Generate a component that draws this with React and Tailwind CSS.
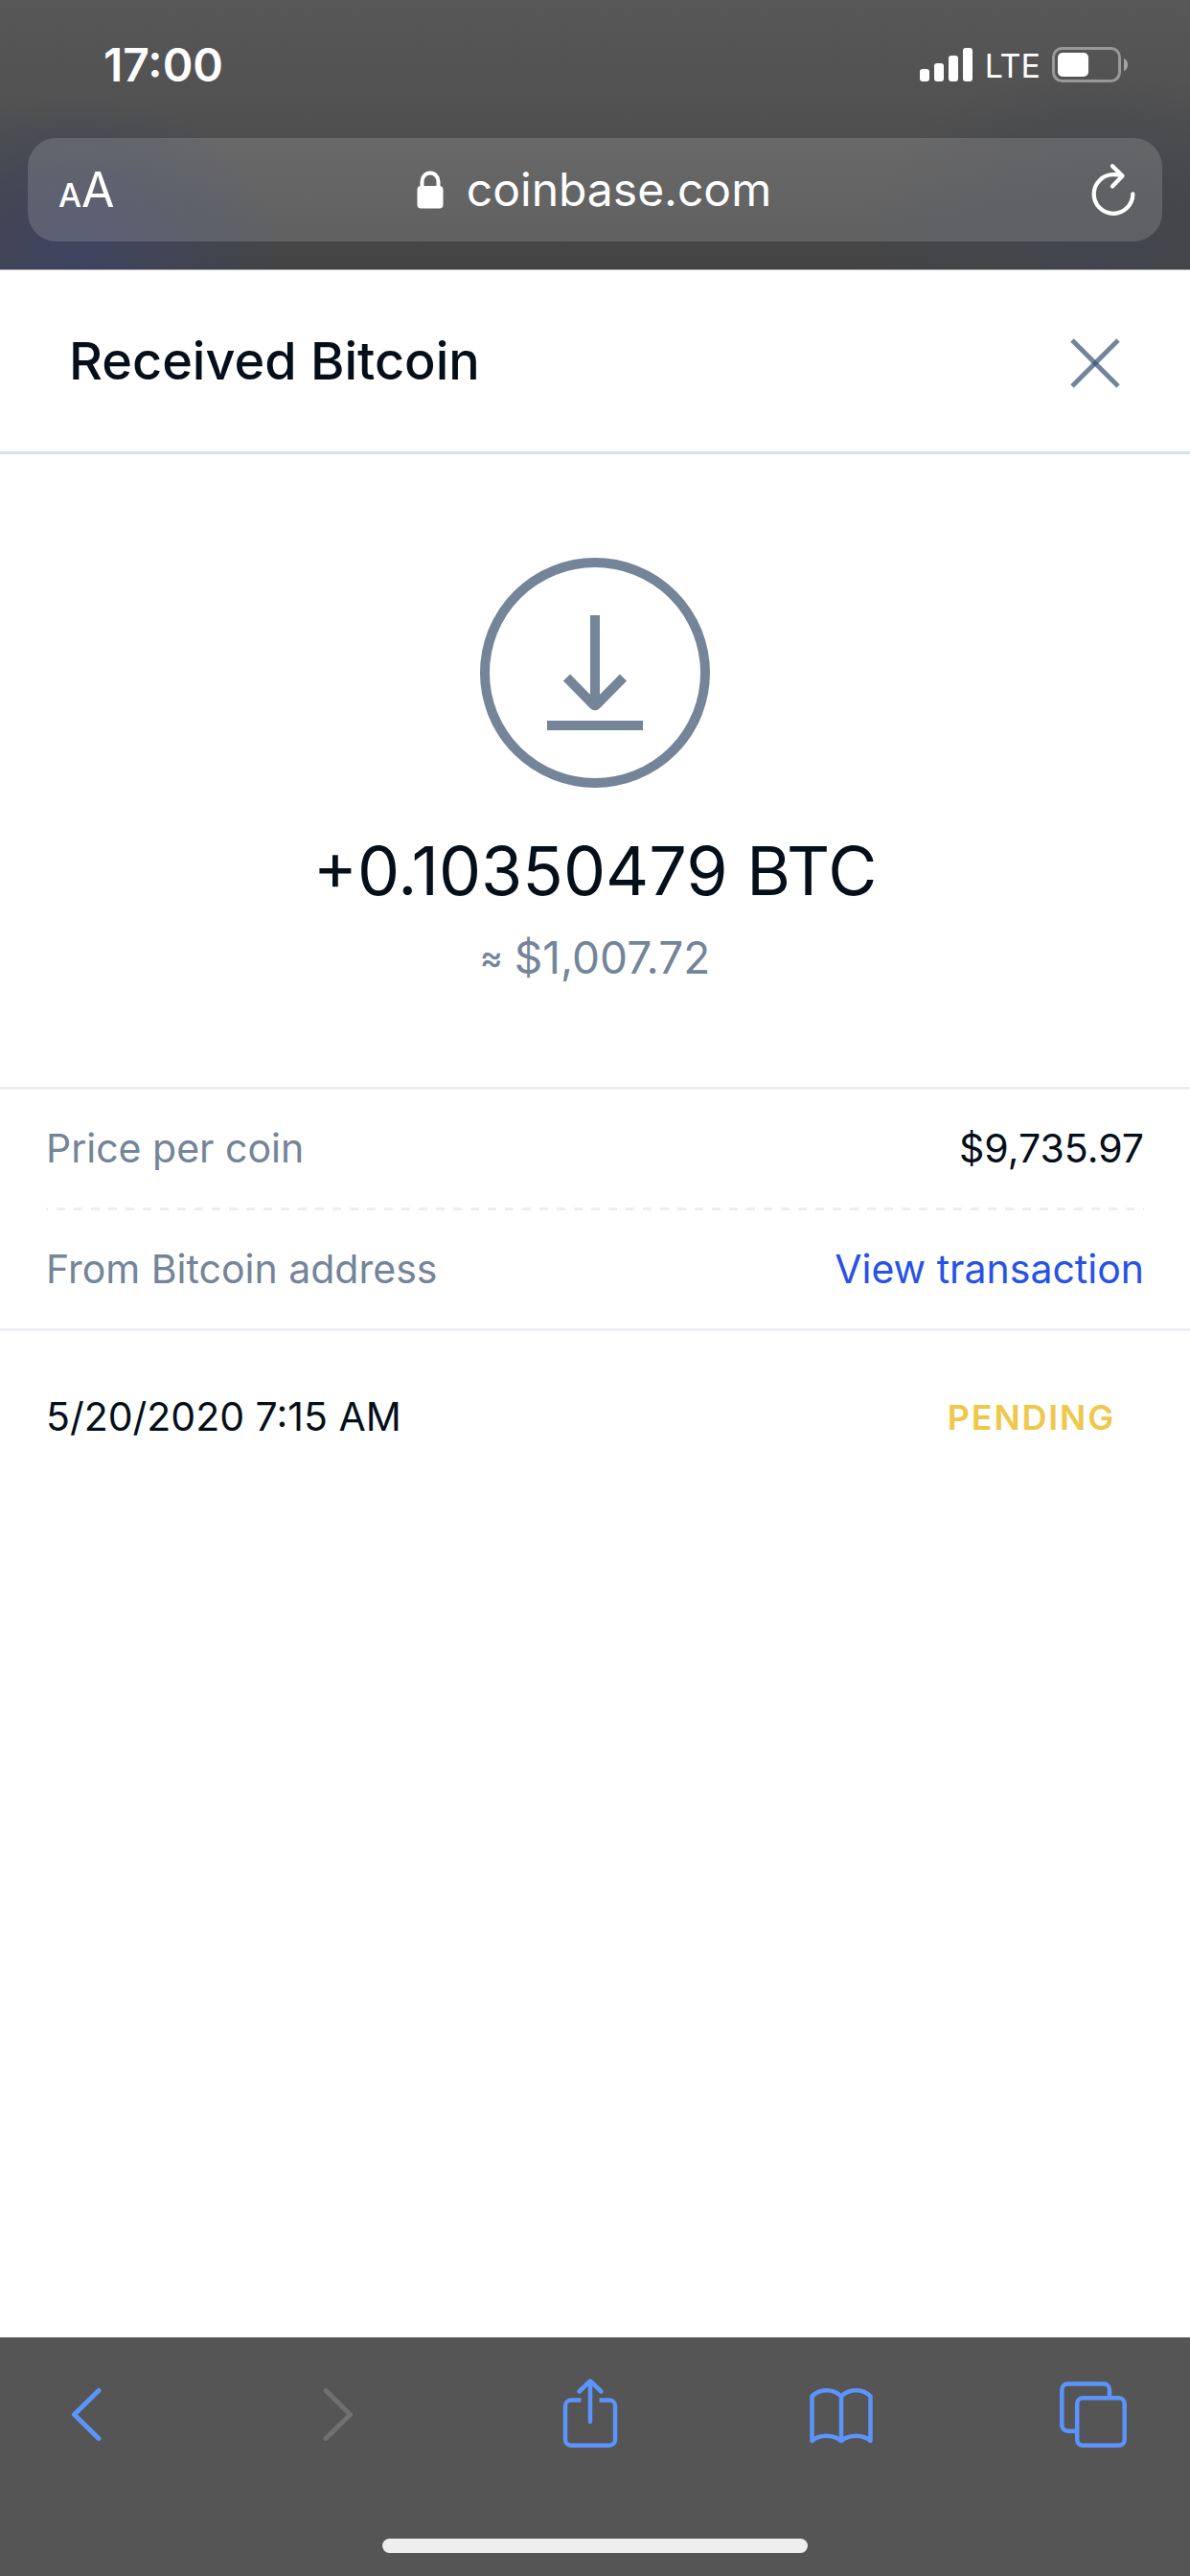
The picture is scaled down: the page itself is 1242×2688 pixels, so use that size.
import { useState } from "react";

const details = [
  { label: "Price per coin", value: "$9,735.97" },
  { label: "From Bitcoin address", value: "View transaction", href: "#transaction" },
];

function StatusBar() {
  return (
    <div className="flex h-36 items-center justify-between pr-16 pb-2 pl-[108px] text-white">
      <span className="text-5xl font-semibold">17:00</span>
      <div className="flex items-center">
        <svg width="56" height="36" viewBox="0 0 56 36" fill="currentColor" aria-hidden="true">
          <rect x="0" y="22" width="10" height="13" rx="3" />
          <rect x="15" y="16" width="10" height="19" rx="3" />
          <rect x="30" y="8" width="10" height="27" rx="3" />
          <rect x="45" y="0" width="10" height="35" rx="3" />
        </svg>
        <span className="ml-3 text-[34px]">LTE</span>
        <svg className="ml-3" width="80" height="38" viewBox="0 0 80 38" aria-hidden="true">
          <rect x="1.5" y="1.5" width="69" height="34" rx="9" fill="none" stroke="#999" strokeWidth="3" />
          <rect x="6" y="6" width="32" height="25" rx="5" fill="#fff" />
          <path d="M75 12c3 1 4 4 4 6.500s-1 5.500-4 6.500z" fill="#a3a3a3" />
        </svg>
      </div>
    </div>
  );
}

function AddressBar() {
  return (
    <div className="mx-[29px] flex h-[108px] items-center justify-between rounded-[30px] bg-white/15 pr-6 pl-8 text-white">
      <button type="button" aria-label="Text size" className="flex w-[118px] items-baseline">
        <span className="text-[34px] leading-none font-medium">A</span>
        <span className="text-[50px]">A</span>
      </button>
      <div className="flex items-center gap-6">
        <svg width="28" height="40" viewBox="0 0 28 40" aria-hidden="true">
          <path d="M5.500 19V11.500a8.500 9 0 0 1 17 0V19" fill="none" stroke="#fff" strokeWidth="4" />
          <rect x="0.500" y="16" width="27" height="23.500" rx="4" fill="#fff" />
        </svg>
        <span className="text-5xl">coinbase.com</span>
      </div>
      <button type="button" aria-label="Reload" className="flex w-32 justify-end">
        <svg
          width="54"
          height="60"
          viewBox="0 0 54 60"
          fill="none"
          stroke="#fff"
          strokeWidth="4.300"
          strokeLinecap="round"
          strokeLinejoin="round"
        >
          <path d="M47.300 34.500A20.300 20.300 0 1 1 27 14.200c3.500 0 6.500.4 9 1.300" />
          <path d="M26 5.200 36.500 15.500 26 26.500" />
        </svg>
      </button>
    </div>
  );
}

function ReceiveIcon() {
  return (
    <svg width="240" height="240" viewBox="0 0 240 240" fill="none" stroke="#748499" strokeWidth="10" aria-hidden="true">
      <circle cx="120" cy="120" r="115" />
      <path d="M120 60V152" />
      <path d="M90.500 125 118.500 153.500Q120 155 121.500 153.500L149.500 125" />
      <path d="M70 175H170" />
    </svg>
  );
}

function ToolbarButton({ label, disabled, children }) {
  return (
    <button type="button" aria-label={label} disabled={disabled} className="text-[#5b94fb] disabled:text-[#707070]">
      <svg
        width="80"
        height="80"
        viewBox="0 0 80 80"
        fill="none"
        stroke="currentColor"
        strokeWidth="4.500"
        strokeLinecap="round"
        strokeLinejoin="round"
      >
        {children}
      </svg>
    </button>
  );
}

function Toolbar() {
  return (
    <footer className="bg-[#555] pt-[41px] pb-6">
      <nav className="flex justify-between pr-[61px] pl-[50px]">
        <ToolbarButton label="Back">
          <path strokeWidth="5" d="M53 14.500 27.500 39.500 53 64.500" />
        </ToolbarButton>
        <ToolbarButton label="Forward" disabled>
          <path strokeWidth="5" d="M27 14.500 52.500 39.500 27 64.500" />
        </ToolbarButton>
        <ToolbarButton label="Share">
          <path strokeLinecap="butt" d="M30.500 24.500H20a6 6 0 0 0-6 6V65.700a6 6 0 0 0 6 6H60a6 6 0 0 0 6-6V30.500a6 6 0 0 0-6-6H49.500" />
          <path d="M40 5V47M28.500 15.500 40 4.500 51.500 15.500" />
        </ToolbarButton>
        <ToolbarButton label="Bookmarks">
          <path d="M9.500 67V20.500C17 12 32 12 40 20.500 48 12 63 12 70.500 20.500V67C63 60 48 60 40 67 32 60 17 60 9.500 67ZM40 20.500V67" />
        </ToolbarButton>
        <ToolbarButton label="Tabs">
          <rect x="23.200" y="22.300" width="49.500" height="49.500" rx="6" />
          <path strokeLinecap="butt" d="M57 22V13.500a6 6 0 0 0-6-6H13.300a6 6 0 0 0-6 6V50.700a6 6 0 0 0 6 6H23" />
        </ToolbarButton>
      </nav>
      <div className="mx-auto mt-[89px] h-[15px] w-[444px] rounded-full bg-[#eee]" />
    </footer>
  );
}

export default function App() {
  const [open, setOpen] = useState(true);

  return (
    <div className="flex min-h-screen flex-col bg-white font-['Inter',sans-serif] text-[#050f19]">
      <header className="border-b border-[#aaa] bg-[radial-gradient(220px_170px_at_80px_270px,#3d4460,transparent),radial-gradient(260px_200px_at_92%_270px,#42454d,transparent),linear-gradient(#575757,#525252_100px,#434343)] pb-[29px]">
        <StatusBar />
        <AddressBar />
      </header>

      <main className="flex-1">
        {open && (
          <section aria-labelledby="dialog-title">
            <div className="flex h-48 items-center justify-between border-b-3 border-[#dae1e8] px-[72px]">
              <h1 id="dialog-title" className="text-[54px] font-medium">
                Received Bitcoin
              </h1>
              <button type="button" aria-label="Close" onClick={() => setOpen(false)} className="pt-1">
                <svg width="54" height="54" viewBox="0 0 54 54" stroke="#3f5573" strokeOpacity="0.720" strokeWidth="5">
                  <path d="M3 3 51 51" />
                  <path d="M51 3 3 51" />
                </svg>
              </button>
            </div>

            <div className="flex flex-col items-center border-b-3 border-[#ebeff2] pt-27 pb-[99px]">
              <ReceiveIcon />
              <p className="mt-[45px] text-[70px] leading-[84px]">+0.10350479 BTC</p>
              <p className="mt-3 flex items-center gap-3 text-[46px] leading-[72px] text-[#748499]">
                <span className="text-4xl font-medium">≈</span>
                <span>$1,007.72</span>
              </p>
            </div>

            <dl className="border-b-3 border-[#ebeff2] px-12 text-[41px]">
              {details.map((item, i) => (
                <div key={item.label}>
                  {i > 0 && (
                    <div className="h-[3px] bg-[repeating-linear-gradient(90deg,#ebeff2_0_2px,transparent_2px_11px,#ebeff2_11px_18px)]" />
                  )}
                  <div className="flex h-[123px] items-center justify-between">
                    <dt className="text-[#748499]">{item.label}</dt>
                    <dd>
                      {item.href ? (
                        <a href={item.href} className="text-[#2851e6]">
                          {item.value}
                        </a>
                      ) : (
                        item.value
                      )}
                    </dd>
                  </div>
                </div>
              ))}
            </dl>

            <div className="flex h-45 items-center justify-between pr-[78px] pl-12">
              <time className="text-[41px]">5/20/2020 7:15 AM</time>
              <span className="text-4xl font-semibold tracking-wider text-[#eec84b]">PENDING</span>
            </div>
          </section>
        )}
      </main>

      <Toolbar />
    </div>
  );
}
